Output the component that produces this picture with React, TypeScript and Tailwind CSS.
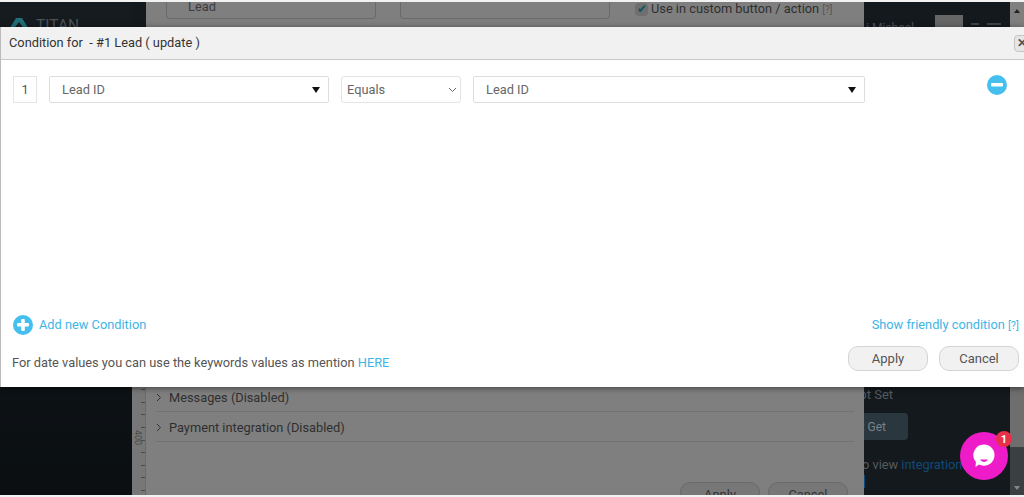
const ticks = Array.from({ length: 9 });

function Caret() {
  return <span className="h-0 w-0 border-x-[4px] border-t-[6px] border-x-transparent border-t-[#111]" />;
}

function RoundIcon({ type }: { type: "plus" | "minus" }) {
  return (
    <svg width="20" height="20" viewBox="0 0 20 20" className="shrink-0">
      <circle cx="10" cy="10" r="10" fill="#45c0ee" />
      <rect x="4" y="8" width="12" height="3.6" rx="1" fill="#fff" />
      {type === "plus" && <rect x="8.2" y="4" width="3.6" height="12" rx="1" fill="#fff" />}
    </svg>
  );
}

function RowChevron() {
  return (
    <svg width="6" height="9" viewBox="0 0 6 9" className="shrink-0">
      <path d="M1 1l3.5 3.5L1 8" fill="none" stroke="#333" strokeWidth="1" />
    </svg>
  );
}

function Backdrop() {
  return (
    <div className="flex h-[497px] flex-col bg-[#f2f2f2] pt-[2px] pb-[2px]">
      <div className="flex min-h-0 flex-1 overflow-hidden text-[12.8px]">
        {/* left nav */}
        <div className="w-[132px] shrink-0 bg-linear-to-b from-[#151b1f] to-[#0b0f12]">
          <div className="flex items-start gap-[6px] pl-[8px] pt-[15px]">
            <svg width="22" height="16" viewBox="0 0 22 16" className="shrink-0">
              <path d="M0 14 L8 1 H14 L22 14 H18 L11 5 L4 14 Z" fill="#1f7078" />
            </svg>
            <span className="text-[15.5px] leading-4 text-[#4c5257]">TITAN</span>
          </div>
        </div>

        {/* ruler */}
        <div className="flex w-[14px] shrink-0 flex-col bg-[#14191d]">
          <div className="flex-1" />
          <div className="relative flex h-[110px] flex-col items-end justify-between border-r border-[#6a6a6a] bg-[#777] py-[4px]">
            {ticks.map((_, i) => (
              <span key={i} className="h-px w-[4px] bg-[#4a4a4a]" />
            ))}
            <span className="absolute left-[1px] top-[45px] text-[9px] leading-none text-[#4a4a4a] [writing-mode:vertical-rl]">400</span>
          </div>
        </div>

        {/* main panel behind the dialog */}
        <div className="flex w-[718px] shrink-0 flex-col bg-[#7f7f7f] text-[#2f2f2f]">
          <div className="flex items-start">
            <div className="ml-[20px] flex h-[17px] w-[210px] items-center justify-between rounded-b border border-t-0 border-[#6a6a6a] pl-[21px] pr-[12px] text-[#3d3d3d]">
              <span className="-mt-[6px]">Lead</span>
              <span className="-mt-[6px]"><Caret /></span>
            </div>
            <div className="ml-[24px] h-[17px] w-[210px] rounded-b border border-t-0 border-[#6a6a6a]" />
            <div className="ml-[25px] flex h-[14px] items-center gap-[3px]">
              <span className="flex h-[13px] w-[13px] items-center justify-center rounded-sm bg-[#6f6f6f] text-[12px] leading-none text-[#0f5560]">✔</span>
              <span className="whitespace-nowrap text-[#2f2f2f]">Use in custom button / action <span className="text-[10px] text-[#555]">[?]</span></span>
            </div>
          </div>

          <div className="flex-1" />

          <div className="pl-[10px] pr-[10px]">
            <div className="flex h-[30px] items-center gap-[7px] border-b border-[#727272] pt-[2px]">
              <RowChevron />
              <span>Messages (Disabled)</span>
            </div>
            <div className="flex h-[30px] items-center gap-[7px] border-b border-[#727272] pt-[2px]">
              <RowChevron />
              <span>Payment integration (Disabled)</span>
            </div>
          </div>

          <div className="mt-[40px] flex h-[13px] justify-end gap-[8px] pr-[16px] text-[#333]">
            <span className="h-[24px] w-[80px] rounded-[10px] border border-[#6a6a6a] bg-[#777] text-center leading-[24px]">Apply</span>
            <span className="h-[24px] w-[80px] rounded-[10px] border border-[#6a6a6a] bg-[#777] text-center leading-[24px]">Cancel</span>
          </div>
        </div>

        {/* right panel */}
        <div className="flex w-[146px] shrink-0 flex-col overflow-hidden bg-[#14191d] text-[#555b60]">
          <div className="flex items-start justify-end gap-[8px] pt-[13px] pr-[9px]">
            <span className="mr-auto -ml-[2px] whitespace-nowrap pl-[4px] pt-[4px] text-[12px] text-[#4c5257]">i Michael</span>
            <span className="h-[14px] w-[28px] bg-[#666]" />
            <span className="mt-[8px] h-[2px] w-[8px] bg-[#3c4348]" />
            <span className="mt-[8px] h-[2px] w-[14px] bg-[#3c4348]" />
          </div>
          <div className="flex-1" />
          <div className="-ml-[14px] whitespace-nowrap text-[13px] leading-4">Not Set</div>
          <div className="mt-[10px] flex h-[27px] w-[44px] items-center justify-end overflow-hidden whitespace-nowrap rounded-r bg-[#2b373e] pr-[22px] text-[12px] text-[#79838a]">Test Get</div>
          <div className="mt-[17px] -ml-[2px] whitespace-nowrap leading-4">
            o view <span className="text-[#0f4a78]">integration</span>
          </div>
          <div className="mt-[2px] h-[13px] w-[1px] bg-[#0f4a78]" />
          <div className="h-[7px]" />
        </div>

        {/* scrollbar */}
        <div className="flex w-[14px] shrink-0 flex-col items-center justify-between bg-[#3c3f41]">
          <div className="flex h-[146px] w-full shrink-0 items-start justify-center bg-[#7f7f7f] pt-[7px]">
            <span className="h-0 w-0 border-x-[3px] border-b-[4px] border-x-transparent border-b-[#222]" />
          </div>
          <div className="w-full flex-1 bg-[#6e6e6e]" />
          <div className="flex h-[48px] w-full shrink-0 items-end justify-center bg-[#3a3f42] pb-[5px]">
            <span className="h-0 w-0 border-x-[3px] border-t-[4px] border-x-transparent border-t-[#888]" />
          </div>
        </div>
      </div>
    </div>
  );
}

function ConditionDialog() {
  return (
    <div className="absolute inset-x-0 top-[27px] flex h-[360px] flex-col overflow-hidden border-l border-[#bbb] bg-white text-[12.8px] text-[#444] shadow-[0_1px_6px_rgba(0,0,0,0.5)]">
      <div className="flex h-[33px] shrink-0 items-center justify-between border-b border-[#c8c8c8] bg-[#f1f1f1] pl-[8px]">
        <span className="whitespace-pre text-[#333]">Condition for  - #1 Lead ( update )</span>
        <span className="mr-[-4px] flex h-[17px] w-[14px] items-center rounded-sm border border-[#c4c4c4] bg-[#e6e6e6] pl-[2px] text-[12px] font-bold leading-none text-[#555]">✕</span>
      </div>

      <div className="flex flex-1 items-start pl-[12px] pr-[17px] pt-[16px]">
        <div className="flex h-[27px] w-[24px] items-center justify-center border border-[#e4e4e4] text-[#555]">1</div>
        <div className="ml-[12px] flex h-[27px] w-[280px] items-center justify-between rounded-[2px] border border-[#ddd] pl-[12px] pr-[8px] text-[#666]">
          <span>Lead ID</span>
          <Caret />
        </div>
        <div className="ml-[12px] flex h-[27px] w-[120px] items-center justify-between rounded-[3px] border border-[#e4e4e4] pl-[5px] pr-[3px] text-[#666]">
          <span>Equals</span>
          <svg width="9" height="6" viewBox="0 0 9 6"><path d="M1 1l3.5 3.5L8 1" fill="none" stroke="#666" strokeWidth="1" /></svg>
        </div>
        <div className="ml-[12px] flex h-[27px] w-[392px] items-center justify-between rounded-[2px] border border-[#ddd] pl-[12px] pr-[8px] text-[#666]">
          <span>Lead ID</span>
          <Caret />
        </div>
        <div className="ml-auto -mt-[1px]"><RoundIcon type="minus" /></div>
      </div>

      <div className="flex items-center justify-between pl-[12px] pr-[5px]">
        <div className="flex items-center gap-[6px] text-[#3db5e6]">
          <RoundIcon type="plus" />
          <span>Add new Condition</span>
        </div>
        <span className="text-[#3db5e6]">Show friendly condition <span className="text-[11px]">[?]</span></span>
      </div>

      <div className="mt-[11px] mb-[16px] flex items-end justify-between pl-[11px] pr-[5px]">
        <span className="leading-[17px] text-[#555]">For date values you can use the keywords values as mention <span className="text-[#3db5e6]">HERE</span></span>
        <div className="flex gap-[11px] text-[13px]">
          <button className="h-[25px] w-[80px] rounded-[10px] border border-[#d4d4d4] bg-[#f1f1f1] text-[#555]">Apply</button>
          <button className="h-[25px] w-[80px] rounded-[10px] border border-[#d4d4d4] bg-[#f1f1f1] text-[#555]">Cancel</button>
        </div>
      </div>
    </div>
  );
}

function ChatBubble() {
  return (
    <div className="absolute left-[960px] top-[432px] flex h-[48px] w-[48px] items-center justify-center rounded-full bg-[#ee1bc9]">
      <svg width="24" height="26" viewBox="0 0 24 26">
        <path d="M12 1.5a10.6 10.6 0 1 1-5 20L3.5 24l.4-5A10.6 10.6 0 0 1 12 1.5z" fill="#fff" />
        <path d="M8 16.5h8a4.5 4.5 0 0 1-8 0z" fill="#ee1bc9" />
      </svg>
      <span className="absolute left-[36px] -top-[1px] flex h-[16px] w-[16px] items-center justify-center rounded-full bg-[#e8304a] text-[11px] font-bold leading-none text-white">1</span>
    </div>
  );
}

export default function App() {
  return (
    <div className="relative h-[497px] w-[1024px] overflow-hidden font-['Roboto',sans-serif]">
      <Backdrop />
      <ConditionDialog />
      <ChatBubble />
    </div>
  );
}
